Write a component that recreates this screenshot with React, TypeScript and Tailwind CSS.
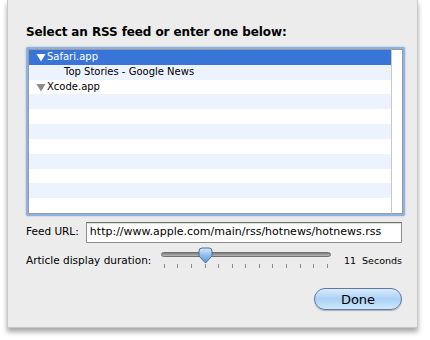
import React from 'react';

const rows = [
  { label: 'Safari.app', level: 0, selected: true, triangle: 'white' },
  { label: 'Top Stories - Google News', level: 1 },
  { label: 'Xcode.app', level: 0, triangle: 'gray' },
  {}, {}, {}, {}, {}, {}, {}, {},
];

const ticks = Array.from({ length: 13 }, (_, i) => i);

const Triangle = ({ color }: { color: string }) => (
  <svg width="10" height="9" viewBox="0 0 10 9" className="mr-[1px] shrink-0">
    <path d="M0.5 1 L9.5 1 L5 8.5 Z" fill={color} />
  </svg>
);

const Knob = () => (
  <svg width="15" height="17" viewBox="0 0 15 17">
    <defs>
      <linearGradient id="kg" x1="0" y1="0" x2="0" y2="1">
        <stop offset="0" stopColor="#dbe9f8" />
        <stop offset="0.5" stopColor="#8dbbec" />
        <stop offset="1" stopColor="#5d98dc" />
      </linearGradient>
    </defs>
    <path d="M1 4 Q1 1 4 1 L11 1 Q14 1 14 4 L14 9 L7.5 16 L1 9 Z" fill="url(#kg)" stroke="#4a6e9c" strokeWidth="1" />
  </svg>
);

export default function App() {
  return (
    <div className="w-[430px] h-[340px] bg-white" style={{ fontFamily: '"Lucida Grande", "DejaVu Sans", sans-serif' }}>
      <div className="ml-[7px] w-[411px] h-[328px] bg-[#ececec] border-x border-b border-[#c9c9c9] shadow-[0_4px_5px_rgba(0,0,0,0.35)] pl-[18px] pr-[15px] pt-[25px] flex flex-col">
        <h1 className="text-[12px] font-bold text-black leading-[15px] tracking-[-0.1px]">Select an RSS feed or enter one below:</h1>

        <div className="mt-[7px] w-[379px] h-[169px] border-2 border-[#8db2df] rounded-[2px] shadow-[0_0_2px_rgba(90,140,210,0.6)] bg-white flex">
          <div className="flex-1 flex flex-col border border-[#9a9a9a] border-r-0">
            {rows.map((r, i) => (
              <div
                key={i}
                className={`h-[15px] flex items-center text-[10px] leading-none whitespace-nowrap ${
                  r.selected ? 'bg-[#3875d7] text-white' : i % 2 === 1 ? 'bg-[#edf3fe] text-black' : 'bg-white text-black'
                } ${r.level === 1 ? 'pl-[35px]' : 'pl-[7px]'}`}
              >
                {r.triangle && <Triangle color={r.triangle === 'white' ? '#ffffff' : '#8a8a8a'} />}
                {r.label}
              </div>
            ))}
          </div>
          <div className="w-[12px] bg-white border border-[#9a9a9a] border-l-[#c8c8c8]" />
        </div>

        <div className="mt-[5px] flex items-center h-[22px]">
          <span className="text-[10.5px] text-black w-[60px]">Feed URL:</span>
          <div className="w-[317px] h-[21px] bg-white border border-[#8e8e8e] border-t-[#6f6f6f] shadow-[inset_0_1px_1px_rgba(0,0,0,0.15)] flex items-center pl-[3px] text-[11px] text-black whitespace-nowrap">
            http://www.apple.com/main/rss/hotnews/hotnews.rss
          </div>
        </div>

        <div className="mt-[4px] flex items-start h-[26px]">
          <span className="text-[10.5px] text-black w-[136px] mt-[6px] whitespace-nowrap">Article display duration:</span>
          <div className="relative w-[174px] h-[26px]">
            <div className="absolute left-[1px] right-0 top-[5px] h-[5px] rounded-full bg-gradient-to-b from-[#7d7d7d] to-[#b8b8b8] border border-[#707070]" />
            <div className="absolute left-[38px] top-0">
              <Knob />
            </div>
            <div className="absolute left-[4px] w-[164px] top-[17px] flex justify-between">
              {ticks.map((t) => (
                <div key={t} className="w-px h-[4px] bg-[#8a8a8a]" />
              ))}
            </div>
          </div>
          <span className="ml-[13px] mt-[7px] text-[9.5px] text-black whitespace-nowrap">11&nbsp; Seconds</span>
        </div>

        <div className="mt-[15px] flex justify-end pr-[0px]">
          <button className="w-[88px] h-[22px] rounded-full border border-[#5b7aa6] bg-gradient-to-b from-[#dcebfb] via-[#a9d0f5] to-[#cfe8fd] shadow-[0_1px_1px_rgba(0,0,0,0.25)] text-[13px] text-black leading-none">
            Done
          </button>
        </div>
      </div>
    </div>
  );
}
